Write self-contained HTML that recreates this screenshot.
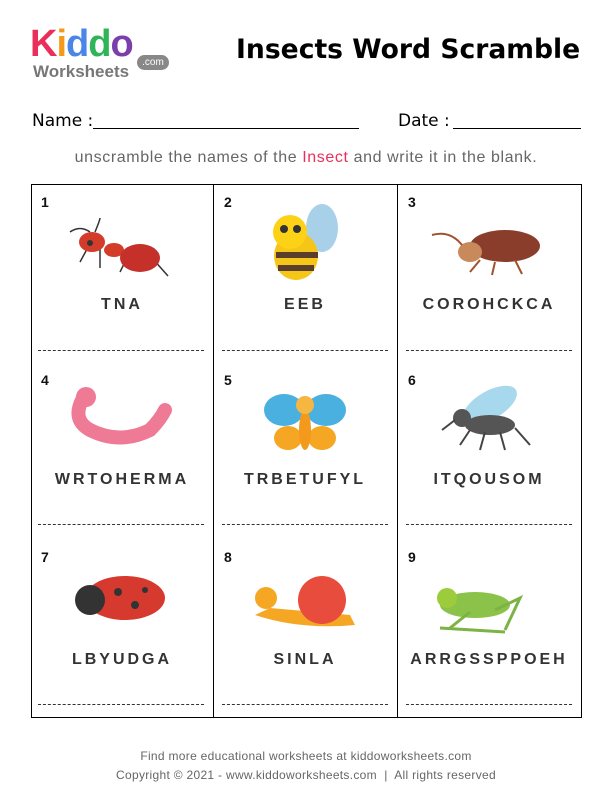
<!DOCTYPE html><html><head><style>
body{margin:0;width:612px;height:792px;background:#fff;position:relative;font-family:"Liberation Sans",sans-serif;overflow:hidden}
.a{position:absolute}
.t{font-family:"Comic Sans MS","DejaVu Sans",sans-serif}
.num{position:absolute;font-weight:bold;font-size:14px;color:#111}
.w{position:absolute;width:180px;text-align:center;font-weight:bold;font-size:16px;letter-spacing:3px;color:#333}
.d{position:absolute;height:0;border-top:1.5px dashed #333;width:166px}
</style></head><body>
<div class="a" style="left:30px;top:24px;font-size:38px;font-weight:bold;letter-spacing:-1px;line-height:40px"><span style="color:#e8305a">K</span><span style="color:#f39a1d">i</span><span style="color:#4a86e8">d</span><span style="color:#2fb457">d</span><span style="color:#7a3fa8">o</span></div>
<div class="a" style="left:33px;top:62px;font-size:17px;font-weight:bold;color:#777">Worksheets</div>
<div class="a" style="left:137px;top:55px;width:32px;height:15px;background:#888;border-radius:8px;color:#fff;font-size:10px;text-align:center;line-height:15px">.com</div>
<div class="a t" style="left:236px;top:34px;font-size:26.6px;font-weight:bold;color:#000;white-space:nowrap">Insects Word Scramble</div>
<div class="a t" style="left:32px;top:111px;font-size:17px">Name :</div>
<div class="a" style="left:93px;top:128px;width:266px;border-top:1px solid #000"></div>
<div class="a t" style="left:398px;top:111px;font-size:17px">Date :</div>
<div class="a" style="left:453px;top:128px;width:128px;border-top:1px solid #000"></div>
<div class="a" style="left:0;width:612px;top:149px;text-align:center;font-size:16px;letter-spacing:0.6px;color:#666;white-space:nowrap">unscramble the names of the <span style="color:#e8305a">Insect</span> and write it in the blank.</div>
<div class="a" style="left:31px;top:184px;width:549px;height:532px;border:1px solid #000"></div>
<div class="a" style="left:213px;top:184px;height:533px;border-left:1px solid #000"></div>
<div class="a" style="left:397px;top:184px;height:533px;border-left:1px solid #000"></div>

<div class="num" style="left:41px;top:194px">1</div><div class="num" style="left:224px;top:194px">2</div><div class="num" style="left:408px;top:194px">3</div>
<div class="num" style="left:41px;top:372px">4</div><div class="num" style="left:224px;top:372px">5</div><div class="num" style="left:408px;top:372px">6</div>
<div class="num" style="left:41px;top:549px">7</div><div class="num" style="left:224px;top:549px">8</div><div class="num" style="left:408px;top:549px">9</div>

<div class="w" style="left:32px;top:296px">TNA</div><div class="w" style="left:215px;top:296px">EEB</div><div class="w" style="left:399px;top:296px">COROHCKCA</div>
<div class="w" style="left:32px;top:471px">WRTOHERMA</div><div class="w" style="left:215px;top:471px">TRBETUFYL</div><div class="w" style="left:399px;top:471px">ITQOUSOM</div>
<div class="w" style="left:32px;top:651px">LBYUDGA</div><div class="w" style="left:215px;top:651px">SINLA</div><div class="w" style="left:399px;top:651px">ARRGSSPPOEH</div>

<div class="d" style="left:38px;top:350px"></div><div class="d" style="left:222px;top:350px"></div><div class="d" style="left:406px;top:350px"></div>
<div class="d" style="left:38px;top:524px"></div><div class="d" style="left:222px;top:524px"></div><div class="d" style="left:406px;top:524px"></div>
<div class="d" style="left:38px;top:704px"></div><div class="d" style="left:222px;top:704px"></div><div class="d" style="left:406px;top:704px"></div>

<svg class="a" style="left:0;top:0" width="612" height="792">
<g stroke="#333" stroke-width="1.5" fill="none"><path d="M92 240 L80 262 M100 245 L100 268 M130 252 L120 272 M140 252 L150 270 M145 250 L168 276 M90 232 Q80 225 70 232 M95 232 Q100 220 100 218"/></g>
<ellipse cx="92" cy="242" rx="13" ry="10" fill="#d43c2a"/><ellipse cx="114" cy="250" rx="10" ry="7" fill="#d43c2a"/><ellipse cx="140" cy="258" rx="20" ry="14" fill="#c5302a"/>
<circle cx="90" cy="243" r="3" fill="#333"/>
<ellipse cx="322" cy="228" rx="16" ry="24" fill="#a8d0e8"/>
<ellipse cx="296" cy="256" rx="22" ry="24" fill="#f5c518"/>
<rect x="276" y="252" width="42" height="6" fill="#5a3e2b"/><rect x="278" y="265" width="36" height="6" fill="#5a3e2b"/>
<circle cx="290" cy="232" r="17" fill="#fcd116"/><circle cx="284" cy="229" r="4" fill="#333"/><circle cx="297" cy="229" r="4" fill="#333"/>
<ellipse cx="505" cy="246" rx="35" ry="16" fill="#8a3d2a"/><ellipse cx="470" cy="252" rx="12" ry="10" fill="#c88a5a"/>
<g stroke="#a0522d" stroke-width="2" fill="none"><path d="M480 260 L470 272 M495 262 L492 275 M515 260 L522 274 M462 245 Q450 230 432 235"/></g>
<path d="M82 400 Q72 420 90 430 Q120 445 150 430 Q160 420 165 410" stroke="#ee7a95" stroke-width="14" fill="none" stroke-linecap="round"/>
<circle cx="86" cy="397" r="10" fill="#ee7a95"/>
<ellipse cx="284" cy="410" rx="20" ry="16" fill="#4ab0e0"/><ellipse cx="326" cy="410" rx="20" ry="16" fill="#4ab0e0"/>
<ellipse cx="288" cy="438" rx="14" ry="12" fill="#f5a623"/><ellipse cx="322" cy="438" rx="14" ry="12" fill="#f5a623"/>
<ellipse cx="305" cy="430" rx="6" ry="20" fill="#f39a1d"/><circle cx="305" cy="405" r="9" fill="#f5b642"/>
<ellipse cx="490" cy="405" rx="30" ry="14" fill="#a8d8ee" transform="rotate(-30 490 405)"/>
<ellipse cx="490" cy="425" rx="25" ry="10" fill="#555"/><circle cx="462" cy="418" r="9" fill="#555"/>
<g stroke="#444" stroke-width="2"><path d="M470 430 L460 445 M485 432 L480 450 M500 432 L505 450 M515 428 L530 445 M455 420 L442 430"/></g>
<ellipse cx="125" cy="598" rx="40" ry="22" fill="#d63a2f"/><circle cx="90" cy="600" r="15" fill="#333"/>
<circle cx="118" cy="592" r="4" fill="#333"/><circle cx="135" cy="605" r="4" fill="#333"/><circle cx="145" cy="590" r="3" fill="#333"/>
<path d="M255 615 Q300 630 355 625 L350 615 L270 608 Z" fill="#f5a623"/>
<circle cx="322" cy="600" r="24" fill="#e84c3d"/><circle cx="266" cy="598" r="11" fill="#f5a623"/>
<ellipse cx="475" cy="605" rx="35" ry="13" fill="#8bc34a"/><circle cx="447" cy="598" r="10" fill="#9ccc3c"/>
<g stroke="#7cb342" stroke-width="3" fill="none"><path d="M470 612 L450 628 M495 610 L520 598 L505 630 M440 628 L505 632"/></g>
</svg>

<div class="a" style="left:0;width:612px;top:747px;text-align:center;font-size:12px;letter-spacing:0.3px;color:#666;line-height:19px;white-space:nowrap">Find more educational worksheets at kiddoworksheets.com<br>Copyright © 2021 - www.kiddoworksheets.com &nbsp;|&nbsp; All rights reserved</div>
</body></html>
